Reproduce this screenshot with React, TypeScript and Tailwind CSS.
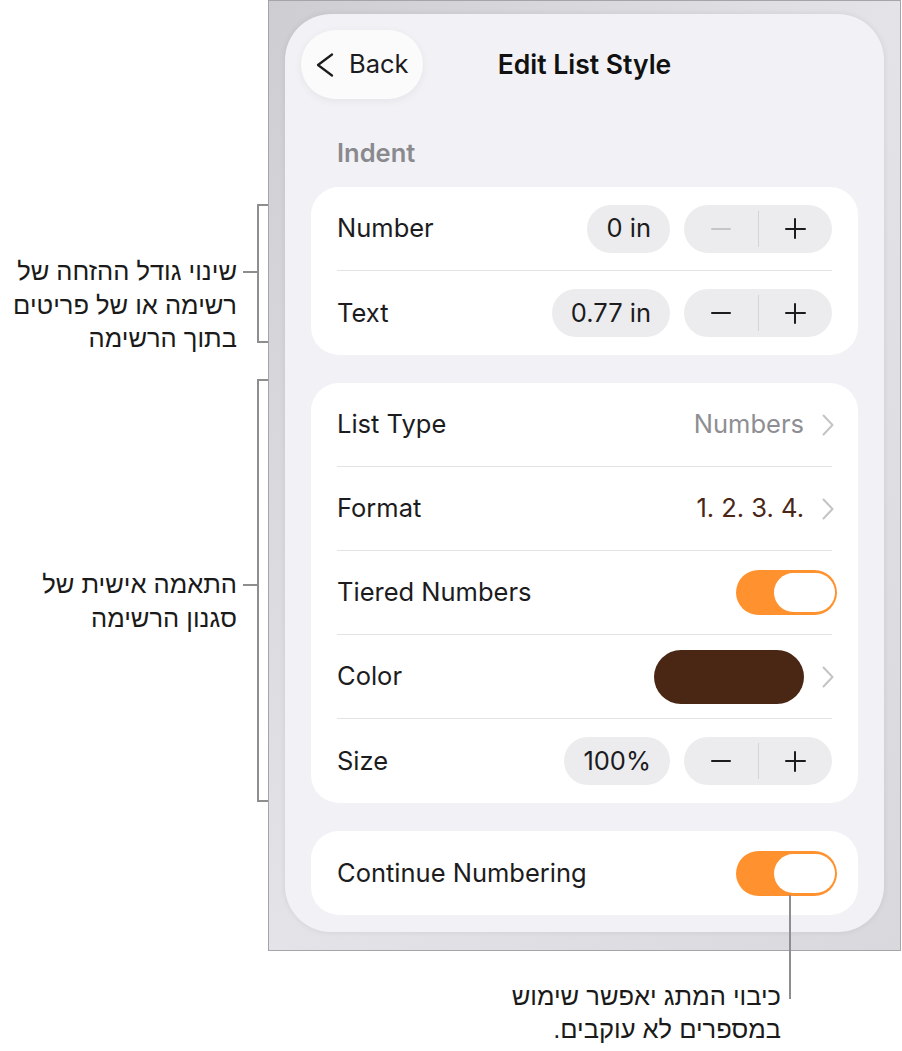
const ui = 'font-[Inter,"Liberation_Sans",sans-serif]'
const he = 'font-["Liberation_Sans","DejaVu_Sans",sans-serif]'

function Stepper({ minusDisabled = false }: { minusDisabled?: boolean }) {
  return (
    <div className="flex h-[48px] w-[148px] items-center rounded-full bg-[#ececee]">
      <div className="flex flex-1 items-center justify-center">
        <div className={`h-[2px] w-[20px] rounded ${minusDisabled ? 'bg-[#c5c5c7]' : 'bg-[#1c1c1e]'}`} />
      </div>
      <div className="h-[36px] w-px bg-[#d4d4d6]" />
      <div className="relative flex flex-1 items-center justify-center">
        <div className="h-[2px] w-[21px] rounded bg-[#1c1c1e]" />
        <div className="absolute h-[21px] w-[2px] rounded bg-[#1c1c1e]" />
      </div>
    </div>
  )
}

function ValuePill({ value }: { value: string }) {
  return (
    <div className="flex h-[48px] items-center rounded-full bg-[#ececee] px-[19px] text-[25.5px] text-[#1c1c1e]">
      {value}
    </div>
  )
}

function Toggle() {
  return (
    <div className="-mr-[5px] flex h-[45px] w-[101px] items-center justify-end rounded-full bg-[#ff922e] pr-[2px]">
      <div className="h-[39px] w-[61px] rounded-full bg-white" />
    </div>
  )
}

function Row({
  label,
  last = false,
  children,
}: {
  label: string
  last?: boolean
  children?: React.ReactNode
}) {
  return (
    <div
      className={`mx-[26px] flex h-[84px] items-center justify-between ${
        last ? '' : 'border-b border-[#e3e3e5]'
      }`}
    >
      <span className="text-[25.5px] text-[#1c1c1e]">{label}</span>
      <div className="flex items-center gap-[14px]">{children}</div>
    </div>
  )
}

function Chevron() {
  return (
    <svg width="12" height="22" viewBox="0 0 12 22" className="-mr-[2px]">
      <path d="M1.5 1.5 L10.5 11 L1.5 20.5" fill="none" stroke="#c4c4c7" strokeWidth="2" strokeLinecap="round" strokeLinejoin="round" />
    </svg>
  )
}

export default function App() {
  return (
    <div className="relative h-[1051px] w-[902px] overflow-hidden bg-white">
      <div className="flex">
        {/* left callouts */}
        <div className={`w-[268px] pt-[204px] text-[25.5px] leading-[33.5px] text-[#1a1a1a] ${he}`}>
          <div className="flex h-[139px] items-start justify-end">
            <div className="mt-[51px] flex items-start">
              <div dir="rtl" className="mr-[6px] text-right">
                <div>שינוי גודל ההזחה של</div>
                <div>רשימה או של פריטים</div>
                <div>בתוך הרשימה</div>
              </div>
              <div className="mt-[16px] h-[2px] w-[14px] bg-[#8e8e8e]" />
            </div>
            <div className="h-[139px] w-[11px] border-y-2 border-l-2 border-[#8e8e8e]" />
          </div>

          <div className="mt-[36px] flex items-start justify-end">
            <div className="mt-[189px] flex items-start">
              <div dir="rtl" className="mr-[6px] text-right">
                <div>התאמה אישית של</div>
                <div>סגנון הרשימה</div>
              </div>
              <div className="mt-[16px] h-[2px] w-[14px] bg-[#8e8e8e]" />
            </div>
            <div className="h-[423px] w-[11px] border-y-2 border-l-2 border-[#8e8e8e]" />
          </div>
        </div>

        {/* device frame */}
        <div className="h-[951px] w-[633px] border border-[#a5a5a9] bg-gradient-to-br from-[#cdcdd2] via-[#e4e4e8] to-[#d8d8dd] pb-[17px] pl-[16px] pr-[15px] pt-[13px]">
          <div className={`h-[918px] w-[599px] rounded-[46px] bg-[#f2f2f6] px-[26px] pt-[16px] shadow-[0_0_6px_rgba(0,0,0,0.08)] ${ui}`}>
            <div className="-mx-[10px] grid grid-cols-[1fr_auto_1fr] items-center">
              <div className="flex">
                <div className="flex h-[69px] w-[122px] items-center rounded-full bg-[#fbfbfb] pl-[15px] shadow-[0_2px_8px_rgba(0,0,0,0.06)]">
                  <svg width="18" height="24" viewBox="0 0 18 24">
                    <path d="M16 1.5 L2 12 L16 22.5" fill="none" stroke="#1c1c1e" strokeWidth="2.2" strokeLinecap="round" strokeLinejoin="round" />
                  </svg>
                  <span className="ml-[15px] text-[25.5px] text-[#1c1c1e]">Back</span>
                </div>
              </div>
              <div className="text-[26.5px] font-semibold text-[#111]">Edit List Style</div>
              <div />
            </div>

            <div className="ml-[26px] mt-[39px] text-[25.5px] font-semibold leading-[30px] text-[#8a8a8e]">
              Indent
            </div>

            <div className="mt-[19px] rounded-[28px] bg-white">
              <Row label="Number">
                <ValuePill value="0 in" />
                <Stepper minusDisabled />
              </Row>
              <Row label="Text" last>
                <ValuePill value="0.77 in" />
                <Stepper />
              </Row>
            </div>

            <div className="mt-[28px] rounded-[28px] bg-white">
              <Row label="List Type">
                <div className="flex items-center gap-[18px]">
                  <span className="text-[25.5px] text-[#8e8e93]">Numbers</span>
                  <Chevron />
                </div>
              </Row>
              <Row label="Format">
                <div className="flex items-center gap-[18px]">
                  <span className="text-[25.5px] text-[#4a2616]">1. 2. 3. 4.</span>
                  <Chevron />
                </div>
              </Row>
              <Row label="Tiered Numbers">
                <Toggle />
              </Row>
              <Row label="Color">
                <div className="flex items-center gap-[18px]">
                  <div className="h-[54px] w-[150px] rounded-full bg-[#4a2614]" />
                  <Chevron />
                </div>
              </Row>
              <Row label="Size" last>
                <ValuePill value="100%" />
                <Stepper />
              </Row>
            </div>

            <div className="mt-[28px] rounded-[28px] bg-white">
              <Row label="Continue Numbering" last>
                <Toggle />
              </Row>
            </div>
          </div>
        </div>
      </div>

      {/* bottom callout */}
      <div className={`mt-[29px] flex justify-end pr-[121px] text-[25.5px] leading-[33px] text-[#1a1a1a] ${he}`}>
        <div dir="rtl" className="text-right">
          <div>כיבוי המתג יאפשר שימוש</div>
          <div>במספרים לא עוקבים.</div>
        </div>
      </div>
      <div className="absolute left-[789px] top-[895px] h-[104px] w-[2px] bg-[#8e8e8e]" />
    </div>
  )
}
